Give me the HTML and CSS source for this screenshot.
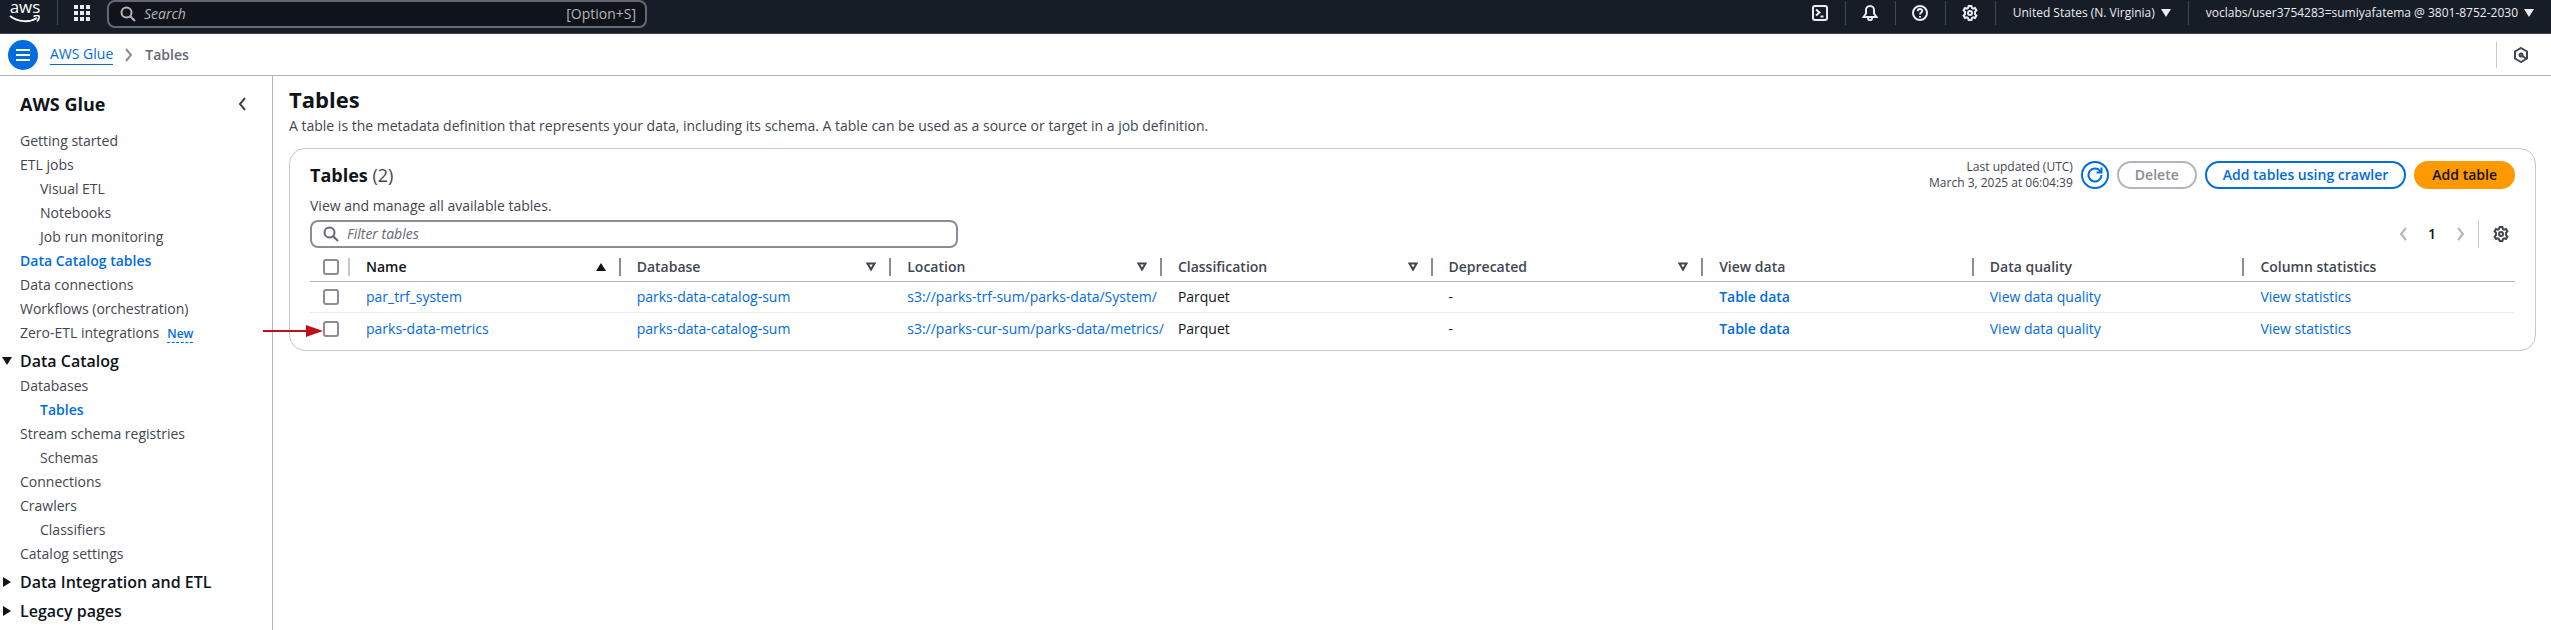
FILE: index.html
```html
<!DOCTYPE html>
<html lang="en">
<head>
<meta charset="utf-8">
<title>AWS Glue - Tables</title>
<link rel="stylesheet" href="styles.css">
</head>
<body>
<svg class="defs" aria-hidden="true">
  <symbol id="gear" viewBox="0 0 16 16"><path d="M6.6 1h2.8l.5 1.900 1.200.7 1.900-.6 1.400 2.400-1.400 1.400v2.400l1.400 1.400-1.400 2.400-1.900-.6-1.200.7-.5 1.900H6.600l-.5-1.900-1.200-.7-1.900.6-1.400-2.400L3 9.200V6.800L1.600 5.400 3 3l1.900.6 1.200-.7z"/><circle cx="8" cy="8" r="2"/></symbol>
  <symbol id="search" viewBox="0 0 16 16"><circle cx="6.500" cy="6.500" r="5"/><path d="M10.200 10.200 15 15"/></symbol>
  <symbol id="left" viewBox="0 0 8 14"><path d="M7 1 2 7l5 6"/></symbol>
  <symbol id="right" viewBox="0 0 8 14"><path d="m1 1 5 6-5 6"/></symbol>
  <symbol id="sort" viewBox="0 0 10 10"><path d="M1.500 1.500h7L5 7.500z"/></symbol>
</svg>

<header class="topnav">
  <a class="logo" href="#" aria-label="aws home"><span class="logo-text">aws</span>
    <svg class="logo-smile" viewBox="0 0 32 9"><path d="M1 1c8 6 19 7 27 2" fill="none" stroke="#fff" stroke-width="2"/><path d="M24.500 1.500c2-1 4.500-1 5.500-.5.500 1.500-.5 4-2 5.500" fill="none" stroke="#fff" stroke-width="1.500"/></svg>
  </a>
  <button class="apps" aria-label="Services"><svg width="16" height="16" fill="currentColor"><path d="M0 0h4v4H0zm6 0h4v4H6zm6 0h4v4h-4zM0 6h4v4H0zm6 0h4v4H6zm6 0h4v4h-4zM0 12h4v4H0zm6 0h4v4H6zm6 0h4v4h-4z"/></svg></button>
  <label class="top-search">
    <svg class="icon"><use href="#search"/></svg>
    <input type="search" placeholder="Search" aria-label="Search">
    <span>[Option+S]</span>
  </label>
  <nav class="tools">
    <button class="tool" aria-label="CloudShell"><svg class="icon" viewBox="0 0 16 16"><rect x="1" y="1" width="14" height="14" rx="2"/><path d="m4 4.500 3.500 3L4 10.500M8.500 11.500h3"/></svg></button>
    <button class="tool" aria-label="Notifications"><svg class="icon" viewBox="0 0 16 16"><path d="M8 1C5.500 1 4 3 4 5v3.500L1.500 12h13L12 8.500V5c0-2-1.500-4-4-4zM6 13c0 3 4 3 4 0"/></svg></button>
    <button class="tool" aria-label="Help"><svg class="icon" viewBox="0 0 16 16"><circle cx="8" cy="8" r="7"/><path d="M5.800 6.300c0-3 4.400-3 4.400-.2C10.200 7.600 8 7.500 8 9.600M8 11v1.600"/></svg></button>
    <button class="tool" aria-label="Settings"><svg class="icon"><use href="#gear"/></svg></button>
    <button class="tool menu">United States (N. Virginia)<i class="caret"></i></button>
    <button class="tool menu">voclabs/user3754283=sumiyafatema @ 3801-8752-2030<i class="caret"></i></button>
  </nav>
</header>

<div class="crumbbar">
  <button class="burger" aria-label="Menu"><svg width="14" height="12"><path d="M0 1h14M0 6h14M0 11h14" stroke="#fff" stroke-width="2"/></svg></button>
  <a class="crumb" href="#">AWS Glue</a>
  <svg class="chev"><use href="#right"/></svg>
  <span class="current">Tables</span>
  <button class="assist" aria-label="Assistant"><svg class="icon" viewBox="0 0 16 16"><path d="m8 1 6 3.500v7L8 15l-6-3.500v-7z"/><path d="m8 8 5 3.500"/><circle cx="8" cy="8" r="1.500"/></svg></button>
</div>

<div class="body">
  <aside class="side">
    <div class="side-head"><h2>AWS Glue</h2><button aria-label="Close navigation"><svg class="chev"><use href="#left"/></svg></button></div>
    <nav>
      <a href="#">Getting started</a>
      <a href="#">ETL jobs</a>
      <a class="sub" href="#">Visual ETL</a>
      <a class="sub" href="#">Notebooks</a>
      <a class="sub" href="#">Job run monitoring</a>
      <a class="active" href="#">Data Catalog tables</a>
      <a href="#">Data connections</a>
      <a href="#">Workflows (orchestration)</a>
      <a href="#">Zero-ETL integrations<span class="new">New</span></a>
      <button class="group" aria-expanded="true"><i class="caret"></i>Data Catalog</button>
      <a href="#">Databases</a>
      <a class="sub active" href="#">Tables</a>
      <a href="#">Stream schema registries</a>
      <a class="sub" href="#">Schemas</a>
      <a href="#">Connections</a>
      <a href="#">Crawlers</a>
      <a class="sub" href="#">Classifiers</a>
      <a href="#">Catalog settings</a>
      <button class="group" aria-expanded="false"><i class="caret side-caret"></i>Data Integration and ETL</button>
      <button class="group" aria-expanded="false"><i class="caret side-caret"></i>Legacy pages</button>
    </nav>
  </aside>

  <main class="main">
    <h1>Tables</h1>
    <p class="desc">A table is the metadata definition that represents your data, including its schema. A table can be used as a source or target in a job definition.</p>
    <section class="card">
      <div class="row">
        <h2>Tables <span>(2)</span></h2>
        <div class="actions">
          <p class="updated">Last updated (UTC)<br>March 3, 2025 at 06:04:39</p>
          <button class="btn round" aria-label="Refresh"><svg class="icon" viewBox="0 0 16 16"><path d="M14.500 8A6.500 6.500 0 1 1 12.800 3.600L14 5M14.500.5V5.500H9.500"/></svg></button>
          <button class="btn" disabled>Delete</button>
          <button class="btn">Add tables using crawler</button>
          <button class="btn primary">Add table</button>
        </div>
      </div>
      <p class="hint">View and manage all available tables.</p>
      <div class="row filter-row">
        <label class="filter"><svg class="icon"><use href="#search"/></svg><input type="search" placeholder="Filter tables" aria-label="Filter tables"></label>
        <div class="pager">
          <button aria-label="Previous page" disabled><svg class="chev"><use href="#left"/></svg></button>
          <button class="page">1</button>
          <button aria-label="Next page" disabled><svg class="chev"><use href="#right"/></svg></button>
          <button class="prefs" aria-label="Preferences"><svg class="icon"><use href="#gear"/></svg></button>
        </div>
      </div>
      <table>
        <thead>
          <tr>
            <th class="pick"><input type="checkbox" aria-label="Select all"></th>
            <th class="sorted"><div>Name<i class="caret up"></i></div></th>
            <th><div>Database<svg class="sort"><use href="#sort"/></svg></div></th>
            <th><div>Location<svg class="sort"><use href="#sort"/></svg></div></th>
            <th><div>Classification<svg class="sort"><use href="#sort"/></svg></div></th>
            <th><div>Deprecated<svg class="sort"><use href="#sort"/></svg></div></th>
            <th><div>View data</div></th>
            <th><div>Data quality</div></th>
            <th><div>Column statistics</div></th>
          </tr>
        </thead>
        <tbody>
          <tr>
            <td class="pick"><input type="checkbox" aria-label="Select par_trf_system"></td>
            <td><a href="#">par_trf_system</a></td>
            <td><a href="#">parks-data-catalog-sum</a></td>
            <td><a href="#">s3://parks-trf-sum/parks-data/System/</a></td>
            <td>Parquet</td>
            <td>-</td>
            <td><a class="strong" href="#">Table data</a></td>
            <td><a href="#">View data quality</a></td>
            <td><a href="#">View statistics</a></td>
          </tr>
          <tr>
            <td class="pick"><input type="checkbox" aria-label="Select parks-data-metrics"><svg class="pointer" viewBox="0 0 60 12" aria-hidden="true"><path d="M0 5h43V0l17 6-17 6V7H0z" fill="#bd1119"/></svg></td>
            <td><a href="#">parks-data-metrics</a></td>
            <td><a href="#">parks-data-catalog-sum</a></td>
            <td><a href="#">s3://parks-cur-sum/parks-data/metrics/</a></td>
            <td>Parquet</td>
            <td>-</td>
            <td><a class="strong" href="#">Table data</a></td>
            <td><a href="#">View data quality</a></td>
            <td><a href="#">View statistics</a></td>
          </tr>
        </tbody>
      </table>
    </section>
  </main>
</div>
</body>
</html>
```

FILE: styles.css
```css
* { box-sizing: border-box; }
body {
  margin: 0;
  min-height: 100vh;
  display: flex;
  flex-direction: column;
  font: 14px/20px "Open Sans", "Noto Sans", sans-serif;
  color: #0f141a;
  background: #fff;
}
h1, h2, p { margin: 0; }
a { color: #006ce0; text-decoration: none; }
button, input { font: inherit; color: inherit; }
button { background: none; border: 0; padding: 0; display: flex; align-items: center; }
.defs { position: absolute; width: 0; height: 0; }
.icon { width: 16px; height: 16px; flex: none; fill: none; stroke: currentColor; stroke-width: 2; }
.chev { width: 8px; height: 14px; flex: none; fill: none; stroke: currentColor; stroke-width: 2; }
.caret { flex: none; border: 5px solid transparent; border-top: 8px solid currentColor; border-bottom: 0; }
.caret.up { border-top: 0; border-bottom: 8px solid currentColor; }
.caret.side-caret { border: 5px solid transparent; border-left: 8px solid currentColor; border-right: 0; }

.topnav {
  display: flex;
  align-items: flex-start;
  height: 34px;
  background: #161d26;
  border-bottom: 1px solid #424650;
  color: #ebebf0;
}
.logo { width: 58px; height: 25px; padding-left: 9px; border-right: 1px solid #424650; color: #fff; }
.logo-text { display: block; width: 32px; height: 15px; font-size: 17px; line-height: 14px; text-align: center; }
.logo-smile { display: block; width: 32px; height: 9px; }
.apps { height: 26px; padding: 0 17px 0 16px; }
.top-search {
  display: flex;
  align-items: center;
  gap: 8px;
  width: 540px;
  height: 28px;
  padding: 0 9px 0 11px;
  border: 2px solid #656871;
  border-radius: 8px;
  background: #0f141a;
  color: #b4b4bb;
}
input[type="search"] { flex: 1; min-width: 0; border: 0; padding: 0; background: none; outline: 0; appearance: none; }
input::placeholder { color: inherit; opacity: 1; font-style: italic; }
.tools { display: flex; align-items: center; height: 25px; margin-left: auto; }
.tool { height: 24px; padding: 0 17px 0 16px; border-right: 1px solid #424650; }
.tool.menu { gap: 6px; padding: 0 17px; font-size: 12px; font-weight: 500; }
.tool.menu:last-child { border-right: 0; }

.crumbbar {
  display: flex;
  align-items: center;
  height: 42px;
  padding: 0 22px 0 8px;
  border-bottom: 1px solid #b4b4bb;
}
.burger { justify-content: center; width: 30px; height: 30px; border-radius: 50%; background: #006ce0; margin-right: 12px; }
.crumb { border-bottom: 1px solid; line-height: 20px; }
.crumbbar .chev { margin: 0 12px; color: #8c8c94; }
.current { color: #656871; font-weight: 600; }
.assist { margin-left: auto; height: 26px; padding-left: 16px; border-left: 1px solid #c6c6cd; color: #424650; }

.body { display: flex; flex: 1; }
.side { flex: none; width: 273px; border-right: 1px solid #b4b4bb; }
.side-head { display: flex; justify-content: space-between; align-items: center; height: 53px; padding: 2px 26px 0 20px; color: #424650; }
.side-head h2 { font-size: 18px; color: #0f141a; }
.side a { display: block; padding-left: 20px; line-height: 24px; color: #424650; }
.side a.sub { padding-left: 40px; }
.side a.active { color: #006ce0; font-weight: 600; }
.new { margin-left: 8px; border-bottom: 1px dashed; font-size: 12px; line-height: 16px; font-weight: 600; color: #006ce0; display: inline-block; }
.group { width: 100%; height: 29px; padding: 2px 0 0 2px; font-size: 16px; font-weight: 600; }
.group .caret { margin-right: 8px; }
.group .side-caret { margin: 0 9px 0 1px; }

.main { flex: 1; min-width: 0; padding: 8px 15px 16px 16px; }
h1 { margin-bottom: 2px; font-size: 22px; line-height: 30px; }
.desc { padding-bottom: 12px; color: #424650; }
.card { padding: 10px 20px 6px; border: 1px solid #c6c6cd; border-radius: 16px; }
.row { display: flex; align-items: center; justify-content: space-between; }
.card h2 { font-size: 18px; line-height: 28px; }
.card h2 span { font-weight: 400; color: #424650; }
.actions { display: flex; align-items: center; gap: 8px; }
.updated { font-size: 12px; line-height: 16px; text-align: right; color: #424650; }
.btn { height: 28px; padding: 0 16px; border: 2px solid; border-radius: 14px; color: #006ce0; font-weight: 600; }
.btn.round { width: 28px; padding: 0; justify-content: center; }
.btn:disabled { color: #8c8c94; border-color: #b4b4bb; }
.btn.primary { border-color: #f90; background: #f90; color: #0f141a; }
.hint { padding: 5px 0 4px; color: #424650; }
.filter { display: flex; align-items: center; gap: 8px; width: 648px; height: 28px; padding: 0 11px; border: 2px solid #8c8c94; border-radius: 8px; color: #656871; }
.pager { display: flex; align-items: center; height: 28px; color: #b4b4bb; }
.pager .page { padding: 0 21px; color: #0f141a; font-weight: 600; }
.pager .prefs { height: 28px; margin-left: 13px; padding: 0 6px 0 14px; border-left: 1px solid #c6c6cd; }
.pager .prefs svg { color: #424650; }

table { width: 100%; margin-top: 5px; table-layout: fixed; border-collapse: separate; border-spacing: 0; }
th, td { height: 31px; padding: 0 0 0 16px; text-align: left; border-bottom: 1px solid #ebebf0; white-space: nowrap; }
th { height: 29px; border-color: #b4b4bb; color: #424650; font-weight: 600; }
th.sorted { color: #0f141a; }
th div { display: flex; align-items: center; justify-content: space-between; height: 18px; padding-right: 13px; border-right: 2px solid #8c8c94; }
th:last-child div { border: 0; }
tbody tr:last-child td { border: 0; }
.pick { width: 40px; padding: 0 0 0 13px; position: relative; }
th.pick { background: linear-gradient(#c6c6cd, #c6c6cd) no-repeat right 5px / 2px 18px; }
.pick input { display: block; width: 16px; height: 16px; margin: 0; appearance: none; border: 2px solid #8c8c94; border-radius: 3px; background: #fff; }
.pointer { position: absolute; left: -47px; top: 12px; width: 60px; height: 12px; }
.sort { width: 10px; height: 10px; fill: none; stroke: currentColor; stroke-width: 2; }
.strong { font-weight: 600; }
```
